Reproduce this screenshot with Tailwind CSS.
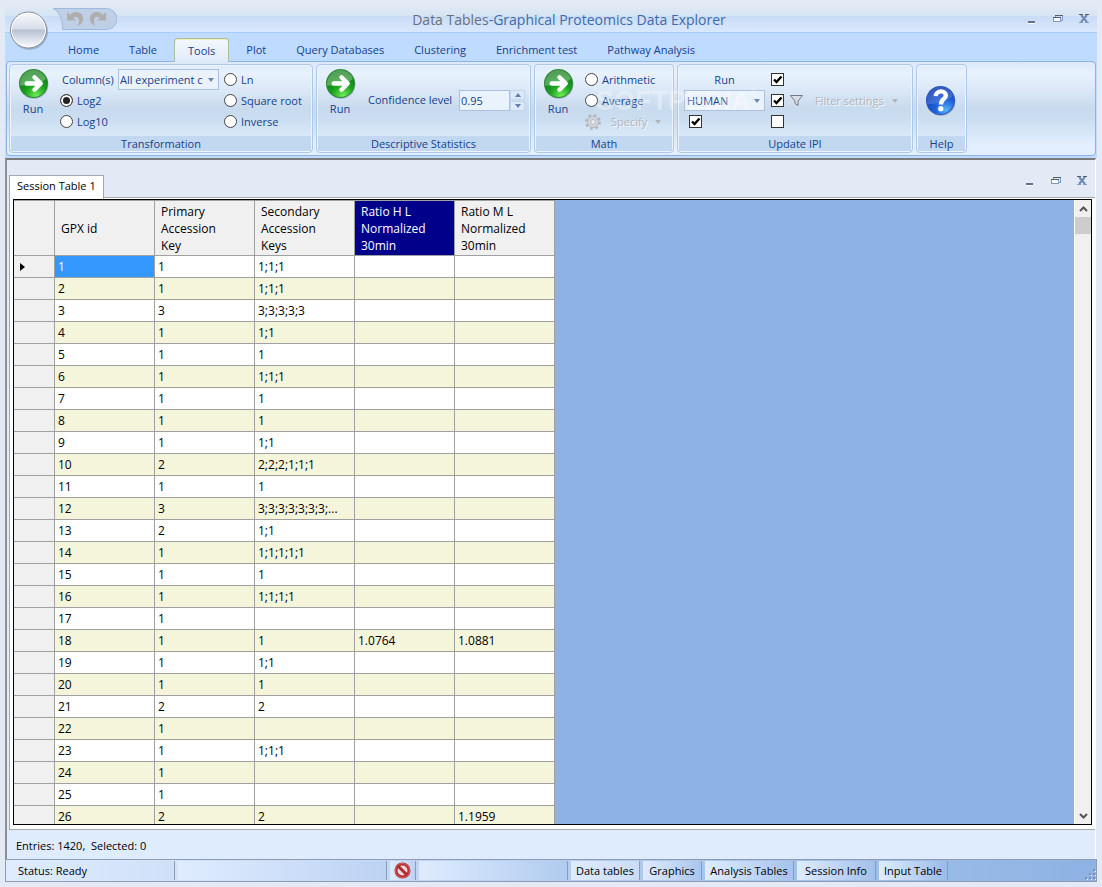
<!DOCTYPE html>
<html lang="en">
<head>
<meta charset="utf-8">
<title>Data Tables-Graphical Proteomics Data Explorer</title>
<script src="https://cdn.jsdelivr.net/npm/@tailwindcss/browser@4"></script>
</head>
<body class="flex h-screen flex-col overflow-hidden bg-[#e3eaf5] px-[5px] pt-[5px] pb-[5px] font-['Open_Sans','Noto_Sans',sans-serif] text-[11px] leading-4 text-black">

<svg class="absolute size-0" aria-hidden="true">
  <defs>
    <radialGradient id="gGreen" cx=".6" cy=".95" r=".85"><stop offset="0" stop-color="#6fee55"/><stop offset=".5" stop-color="#1a9f1e"/><stop offset="1" stop-color="#0b7a12"/></radialGradient>
    <radialGradient id="gBlue" cx=".7" cy=".85" r=".8"><stop offset="0" stop-color="#55b4fb"/><stop offset=".5" stop-color="#1d5fdc"/><stop offset="1" stop-color="#1746b8"/></radialGradient>
    <linearGradient id="gOrb" x2="0" y2="1"><stop offset="0" stop-color="#f6f8fb"/><stop offset=".48" stop-color="#d6dde8"/><stop offset=".49" stop-color="#b4bfd2"/><stop offset="1" stop-color="#f7f9fc"/></linearGradient>
    <symbol id="run" viewBox="0 0 32 32">
      <circle cx="16.500" cy="17" r="15" fill="#5d7896" opacity=".35"/>
      <circle cx="16" cy="16" r="15" fill="#2f8a3b"/>
      <circle cx="16" cy="16" r="14" fill="url(#gGreen)"/>
      <path d="M2 16A14 14 0 0 1 29 11Q21 19 2 18Z" fill="#fff" opacity=".3"/>
      <path d="M9 16H23M17 9.500L23.500 16L17 22.500" fill="none" stroke="#fff" stroke-width="4.500" stroke-linecap="round" stroke-linejoin="round"/>
    </symbol>
    <symbol id="help" viewBox="0 0 32 32">
      <circle cx="16.500" cy="17" r="15" fill="#5d7896" opacity=".4"/>
      <circle cx="16" cy="16" r="15" fill="#2858b8"/>
      <circle cx="16" cy="16" r="14" fill="url(#gBlue)"/>
      <path d="M2 16A14 14 0 0 1 29 11Q21 19 2 20Z" fill="#fff" opacity=".14"/>
      <path d="M11 11.500C11.500 5 21.500 5 21.500 11C21.500 14.500 16.500 14.500 16.500 20" fill="none" stroke="#fff" stroke-width="4.500"/>
      <circle cx="16.300" cy="24.500" r="2.700" fill="#fff"/>
    </symbol>
    <symbol id="undo" viewBox="0 0 17 16"><path d="M0 1V9.500H9L6 6.500C10 4 14 7 11 15C17 12 18 5 13 2C9.500 0 5.500 1 3 4Z" fill="#afaeae"/></symbol>
    <symbol id="tick" viewBox="0 0 13 13"><path d="M3 6.500L5.500 9L10.500 3.500" fill="none" stroke="#000" stroke-width="2.400"/></symbol>
    <symbol id="wmin" viewBox="0 0 10 10"><path d="M1 9.500H8" stroke="#fff"/><path d="M1 8H8" stroke="#5f7390" stroke-width="2"/></symbol>
    <symbol id="wres" viewBox="0 0 10 10"><path d="M2.500 3V1.500H9.500V6.500H8" fill="none" stroke="#7f9bc4"/><path d="M2 1.500H10" stroke="#5a5f68"/><rect x=".5" y="3.500" width="7" height="4" fill="#fff" stroke="#7f9bc4"/><path d="M0 3.500H8" stroke="#5a5f68"/></symbol>
    <symbol id="wcls" viewBox="0 0 10 10"><path d="M2 1L8 8M8 1L2 8" stroke="#6f8ab5" stroke-width="2"/><path d="M0 .5H4M6 .5H10" stroke="#5a5f68"/><path d="M0 8.500H4M6 8.500H10" stroke="#7f9bc4"/></symbol>
    <symbol id="down" viewBox="0 0 6 4"><path d="M0 0H6L3 4Z" fill="currentColor"/></symbol>
  </defs>
</svg>

<header class="relative shrink-0 bg-[#bfdbff] text-[#15428b]">
  <!-- title bar -->
  <div class="flex h-7 items-center border-b border-[#a9cdfb] bg-[linear-gradient(#e3eaf5,#d5e4f3_39%,#c9dcf6_40%,#d9e8fd)] pr-2 pl-12">
    <div class="relative flex h-[21px] w-16 shrink-0 items-center">
      <svg class="absolute inset-0 h-[22px] w-16" viewBox="0 0 64 22"><path d="M0 .5H53.500A10 10 0 0 1 53.500 21.500H9.500C9.500 10 6 3 0 .5Z" fill="#bfd0e6" stroke="#9dbbe2"/></svg>
      <button aria-label="Undo" class="relative ml-[14px]"><svg class="h-4 w-[17px]"><use href="#undo"/></svg></button>
      <button aria-label="Redo" class="relative ml-[5px]"><svg class="h-4 w-[17px] -scale-x-100"><use href="#undo"/></svg></button>
    </div>
    <h1 class="flex-1 pt-0.5 pr-1.5 text-center text-[14px] text-[#3e6aaa]"><span class="text-[#696f7a]">Data Tables</span>-Graphical Proteomics Data Explorer</h1>
    <div class="flex gap-4">
      <button aria-label="Minimize"><svg class="size-[10px]"><use href="#wmin"/></svg></button>
      <button aria-label="Restore"><svg class="size-[10px]"><use href="#wres"/></svg></button>
      <button aria-label="Close"><svg class="size-[10px]"><use href="#wcls"/></svg></button>
    </div>
  </div>
  <button aria-label="Application menu" class="absolute top-[6px] left-[4px]"><svg class="size-10" viewBox="0 0 40 40"><circle cx="20.500" cy="20.500" r="18.500" fill="#8494ad" opacity=".6"/><circle cx="19.500" cy="19" r="18" fill="#fff" stroke="#868d99"/><circle cx="19.500" cy="19" r="16.500" fill="url(#gOrb)"/></svg></button>

  <!-- ribbon tabs -->
  <nav class="flex h-7 items-end gap-1 pl-[50px]">
    <button class="h-6 px-[13px] pt-0.5">Home</button>
    <button class="h-6 px-[13px] pt-0.5">Table</button>
    <button class="relative z-10 -mb-px h-6 rounded-t border border-b-0 border-[#a9bfa0] bg-linear-to-b from-[#f4f8fd] to-[#e0ebf9] px-[13px] shadow-[inset_0_1px_0_#f6eeb4]">Tools</button>
    <button class="h-6 px-[13px] pt-0.5">Plot</button>
    <button class="h-6 px-[13px] pt-0.5">Query Databases</button>
    <button class="h-6 px-[13px] pt-0.5">Clustering</button>
    <button class="h-6 px-[13px] pt-0.5">Enrichment test</button>
    <button class="h-6 px-[13px] pt-0.5">Pathway Analysis</button>
  </nav>

  <!-- ribbon -->
  <div class="mr-px ml-px flex h-[95px] gap-[3px] rounded border border-[#8db2e3] bg-[linear-gradient(#dbe8f8,#e8f2fe_12%,#dbe8f7_30%,#c8daee_50%,#cbdef1_62%,#e3effe_90%)] px-0.5 py-0.5">
    <section class="flex w-[304px] flex-col rounded border border-[#aec8e9] p-px shadow-[inset_0_0_0_1px_#edf4fd]">
      <div class="flex flex-1">
        <button class="flex w-11 flex-col items-center gap-0.5 pt-0.5"><svg class="size-[31px]"><use href="#run"/></svg>Run</button>
        <div class="grid flex-1 grid-cols-[164px_1fr] grid-rows-[21px_21px_21px] items-center pt-[3px] pl-[5px]">
          <div class="flex items-center"><label for="cols" class="w-[58px] pl-0.5">Column(s)</label>
            <div class="relative h-[21px] w-[101px] border border-[#abc1de] bg-[#eaf2fb]">
              <select id="cols" class="h-full w-[84px] appearance-none overflow-hidden pl-px outline-none"><option>All experiment columns</option></select>
              <svg class="pointer-events-none absolute top-2 right-1 h-1 w-1.5 text-[#6a87b4]"><use href="#down"/></svg>
            </div></div>
          <label class="flex items-center gap-1"><input type="radio" name="tr" class="size-[13px] appearance-none rounded-full border border-[#444] bg-white">Ln</label>
          <label class="flex items-center gap-1"><input type="radio" name="tr" checked class="size-[13px] appearance-none rounded-full border border-[#444] bg-white checked:bg-[#222] checked:shadow-[inset_0_0_0_2px_#fff]">Log2</label>
          <label class="flex items-center gap-1"><input type="radio" name="tr" class="size-[13px] appearance-none rounded-full border border-[#444] bg-white">Square root</label>
          <label class="flex items-center gap-1"><input type="radio" name="tr" class="size-[13px] appearance-none rounded-full border border-[#444] bg-white">Log10</label>
          <label class="flex items-center gap-1"><input type="radio" name="tr" class="size-[13px] appearance-none rounded-full border border-[#444] bg-white">Inverse</label>
        </div>
      </div>
      <h2 class="h-[15px] bg-[#c2d8f0] text-center leading-4">Transformation</h2>
    </section>

    <section class="flex w-[215px] flex-col rounded border border-[#aec8e9] p-px shadow-[inset_0_0_0_1px_#edf4fd]">
      <div class="flex flex-1">
        <button class="flex w-11 flex-col items-center gap-0.5 pt-0.5"><svg class="size-[31px]"><use href="#run"/></svg>Run</button>
        <div class="flex flex-1 items-center pb-0.5 pl-1.5">
          <label for="conf" class="w-[91px] whitespace-nowrap">Confidence level</label>
          <input id="conf" value="0.95" class="h-[21px] w-[51px] border border-[#abc1de] bg-[#eaf2fb] px-px outline-none">
          <div class="flex flex-col gap-px">
            <button aria-label="Increase" class="flex h-[10px] w-[15px] items-center justify-center border border-[#c3d5ed] bg-[#dce9f9] text-[#5f7fb0]"><svg class="h-1 w-1.5 rotate-180"><use href="#down"/></svg></button>
            <button aria-label="Decrease" class="flex h-[10px] w-[15px] items-center justify-center border border-[#c3d5ed] bg-[#dce9f9] text-[#5f7fb0]"><svg class="h-1 w-1.5"><use href="#down"/></svg></button>
          </div>
        </div>
      </div>
      <h2 class="h-[15px] bg-[#c2d8f0] text-center leading-4">Descriptive Statistics</h2>
    </section>

    <section class="flex w-[140px] flex-col rounded border border-[#aec8e9] p-px shadow-[inset_0_0_0_1px_#edf4fd]">
      <div class="flex flex-1">
        <button class="flex w-11 flex-col items-center gap-0.5 pt-0.5"><svg class="size-[31px]"><use href="#run"/></svg>Run</button>
        <div class="grid flex-1 grid-rows-[21px_21px_21px] items-center pt-[3px] pl-[5px]">
          <label class="flex items-center gap-1"><input type="radio" name="ma" class="size-[13px] appearance-none rounded-full border border-[#444] bg-white">Arithmetic</label>
          <label class="flex items-center gap-1"><input type="radio" name="ma" class="size-[13px] appearance-none rounded-full border border-[#444] bg-white">Average</label>
          <button disabled class="flex items-center text-[#b1b5bb]">
            <svg class="size-4" viewBox="0 0 16 16"><circle cx="8" cy="8" r="6.500" fill="none" stroke="#b3b7bc" stroke-width="3" stroke-dasharray="2.550 2.550"/><circle cx="8" cy="8" r="5.500" fill="#d5d8dc" stroke="#b3b7bc"/><circle cx="8" cy="8" r="2.500" fill="#e8edf4" stroke="#b3b7bc"/></svg>
            <span class="ml-[10px] [text-shadow:1px_1px_#f4f8fd]">Specify</span><svg class="ml-2 h-1 w-1.5"><use href="#down"/></svg></button>
        </div>
      </div>
      <h2 class="h-[15px] bg-[#c2d8f0] text-center leading-4">Math</h2>
    </section>

    <section class="flex w-[236px] flex-col rounded border border-[#aec8e9] p-px shadow-[inset_0_0_0_1px_#edf4fd]">
      <div class="grid flex-1 grid-cols-[81px_1fr] grid-rows-[21px_21px_21px] items-center pt-[3px] pl-[5px]">
        <button>Run</button>
        <span class="relative ml-[6px] size-[13px] border border-[#333] bg-white"><input type="checkbox" aria-label="Option 1" checked class="peer absolute inset-0 appearance-none"><svg class="pointer-events-none absolute -inset-px hidden size-[13px] peer-checked:block"><use href="#tick"/></svg></span>
        <div class="relative h-[21px] w-[81px] border border-[#abc1de] bg-[#eaf2fb]">
          <select aria-label="Species" class="h-full w-full appearance-none pl-0.5 outline-none"><option>HUMAN</option></select>
          <svg class="pointer-events-none absolute top-2 right-1 h-1 w-1.5 text-[#6a87b4]"><use href="#down"/></svg>
        </div>
        <div class="flex items-center">
          <span class="relative ml-[6px] size-[13px] border border-[#333] bg-white"><input type="checkbox" aria-label="Filter" checked class="peer absolute inset-0 appearance-none"><svg class="pointer-events-none absolute -inset-px hidden size-[13px] peer-checked:block"><use href="#tick"/></svg></span>
          <button disabled class="flex items-center text-[#b1b5bb]"><svg class="ml-[6px] h-[11px] w-[13px]" viewBox="0 0 13 11"><path d="M.5 .5H12.500L8 6V10.500L5 8.500V6Z" fill="#d9e0e8" stroke="#75797f"/></svg><span class="ml-3 [text-shadow:1px_1px_#f4f8fd]">Filter settings</span><svg class="ml-2 h-1 w-1.5"><use href="#down"/></svg></button>
        </div>
        <span class="relative ml-[5px] size-[13px] border border-[#333] bg-white"><input type="checkbox" aria-label="Option 2" checked class="peer absolute inset-0 appearance-none"><svg class="pointer-events-none absolute -inset-px hidden size-[13px] peer-checked:block"><use href="#tick"/></svg></span>
        <span class="relative ml-[6px] size-[13px] border border-[#333] bg-white"><input type="checkbox" aria-label="Option 3" class="peer absolute inset-0 appearance-none"><svg class="pointer-events-none absolute -inset-px hidden size-[13px] peer-checked:block"><use href="#tick"/></svg></span>
      </div>
      <h2 class="h-[15px] bg-[#c2d8f0] text-center leading-4">Update IPI</h2>
    </section>

    <section class="flex w-[51px] flex-col rounded border border-[#aec8e9] p-px shadow-[inset_0_0_0_1px_#edf4fd]">
      <button aria-label="Help" class="flex flex-1 items-center justify-center pr-0.5 pb-0.5"><svg class="size-[31px]"><use href="#help"/></svg></button>
      <h2 class="h-[15px] bg-[#c2d8f0] text-center leading-4">Help</h2>
    </section>
  </div>
  <!-- translucent brand mark over the ribbon -->
  <div class="pointer-events-none absolute top-[80px] left-[591px] flex font-['Liberation_Sans',sans-serif] text-[27px] leading-8 font-bold text-white/35">SOFTPEDIA<span class="text-[9px] leading-3">®</span></div>
  <div class="h-0.5"></div>
</header>

<main class="mr-px flex min-h-0 flex-1 flex-col border-t-2 border-r border-l-2 border-t-[#7b7b7b] border-r-white border-l-[#8b8f96]">
  <div class="flex h-[38px] shrink-0 items-end pl-0.5">
    <button class="z-10 -mb-px h-6 border border-b-0 border-[#a5a8ad] bg-white px-[7px] pb-1 whitespace-nowrap">Session Table 1</button>
    <div class="flex h-full flex-1 items-center justify-end gap-4 border-b border-[#a5a8ad] pt-1 pr-2">
      <button aria-label="Minimize table"><svg class="size-[10px]"><use href="#wmin"/></svg></button>
      <button aria-label="Restore table"><svg class="size-[10px]"><use href="#wres"/></svg></button>
      <button aria-label="Close table"><svg class="size-[10px]"><use href="#wcls"/></svg></button>
    </div>
  </div>
  <div class="ml-0.5 flex min-h-0 flex-1 border-b border-l border-[#a5a8ad] bg-white pt-px pr-[3px] pb-1 pl-[3px]">
    <div class="flex min-w-0 flex-1 border border-black bg-[#8db2e3]">
      <div class="min-w-0 flex-1 overflow-hidden">
        <table class="w-[541px] table-fixed border-separate border-spacing-0 text-left text-[12px]">
          <colgroup><col class="w-[41px]"><col class="w-[100px]"><col class="w-[100px]"><col class="w-[100px]"><col class="w-[100px]"><col class="w-[100px]"></colgroup>
          <thead>
            <tr class="h-14 bg-[#f0f0f0] leading-[17px]">
              <th class="border-t border-r border-b border-[#a0a0a0]"></th>
              <th class="border-t border-r border-b border-[#a0a0a0] px-1.5 font-normal">GPX id</th>
              <th class="border-t border-r border-b border-[#a0a0a0] px-1.5 font-normal">Primary<br>Accession<br>Key</th>
              <th class="border-t border-r border-b border-[#a0a0a0] px-1.5 font-normal">Secondary<br>Accession<br>Keys</th>
              <th class="border-t border-r border-b border-[#a0a0a0] bg-[#00008b] px-1.5 font-normal text-white">Ratio H L<br>Normalized<br>30min</th>
              <th class="border-t border-r border-b border-[#a0a0a0] px-1.5 font-normal">Ratio M L<br>Normalized<br>30min</th>
            </tr>
          </thead>
          <tbody id="rows"></tbody>
        </table>
      </div>
      <div class="flex w-[17px] flex-col border-l border-white bg-[#f0f0f0] text-[#555]">
        <button aria-label="Scroll up" class="flex h-[17px] items-center justify-center"><svg class="h-[6px] w-[9px]" viewBox="0 0 9 6"><path d="M1 5L4.500 1.500L8 5" fill="none" stroke="currentColor" stroke-width="2"/></svg></button>
        <div class="h-[17px] bg-[#cdcdcd]"></div>
        <div class="flex-1"></div>
        <button aria-label="Scroll down" class="flex h-[17px] items-center justify-center"><svg class="h-[6px] w-[9px]" viewBox="0 0 9 6"><path d="M1 1L4.500 4.500L8 1" fill="none" stroke="currentColor" stroke-width="2"/></svg></button>
      </div>
    </div>
  </div>
  <div class="mt-px flex h-7 shrink-0 items-center bg-[#dfecfe] pt-0.5 pl-[9px] whitespace-pre">Entries: 1420,  Selected: 0</div>
</main>

<footer class="flex h-[23px] shrink-0 items-stretch gap-[3px] border border-[#8f9bb3] bg-linear-to-r from-[#dfecfe] to-[#8db2e3] py-px leading-5">
  <div class="w-[169px] border-r border-[#8f9bb3] bg-linear-to-r from-[#dfecfe] to-[#cfe0f8] pl-3">Status: Ready</div>
  <div class="w-[209px] border-r border-[#8f9bb3] bg-linear-to-r from-[#dfecfe] to-[#bdd3f3]"></div>
  <div class="flex w-[26px] items-center justify-center border-r border-[#8f9bb3] bg-linear-to-r from-[#dfecfe] to-[#bdd3f3]"><svg class="size-[17px]" viewBox="0 0 17 17"><circle cx="8.500" cy="8.500" r="6.500" fill="#e8d9e2" stroke="#b5262b" stroke-width="3"/><circle cx="8.500" cy="8.500" r="7" fill="none" stroke="#d9686a"/><path d="M4 4L13 13" stroke="#b5262b" stroke-width="3"/></svg></div>
  <div class="w-[149px] border-r border-[#8f9bb3] bg-linear-to-r from-[#dfecfe] to-[#b0cbf0]"></div>
  <button class="w-[69px] border-r border-[#8f9bb3] bg-linear-to-r from-[#dfecfe] to-[#cadcf7] whitespace-nowrap">Data tables</button>
  <button class="w-[59px] border-r border-[#8f9bb3] bg-linear-to-r from-[#dfecfe] to-[#a9c6ee] whitespace-nowrap">Graphics</button>
  <button class="w-[89px] border-r border-[#8f9bb3] bg-linear-to-r from-[#dfecfe] to-[#a6c3ed] whitespace-nowrap">Analysis Tables</button>
  <button class="w-[79px] border-r border-[#8f9bb3] bg-linear-to-r from-[#dfecfe] to-[#a2c0eb] whitespace-nowrap">Session Info</button>
  <button class="w-[69px] border-r border-[#8f9bb3] bg-linear-to-r from-[#dfecfe] to-[#9bbbe9] whitespace-nowrap">Input Table</button>
  <div class="flex flex-1 items-end justify-end"><svg class="size-3" viewBox="0 0 12 12"><path d="M9 1H11V3H9ZM9 5H11V7H9ZM5 5H7V7H5ZM9 9H11V11H9ZM5 9H7V11H5ZM1 9H3V11H1Z" fill="#8191b0"/><path d="M11 3H12V4H11ZM11 7H12V8H11ZM7 7H8V8H7ZM11 11H12V12H11ZM7 11H8V12H7ZM3 11H4V12H3Z" fill="#fff"/></svg></div>
</footer>

<script>
const data = [["1","1;1;1"],["1","1;1;1"],["3","3;3;3;3;3"],["1","1;1"],["1","1"],["1","1;1;1"],["1","1"],["1","1"],["1","1;1"],["2","2;2;2;1;1;1"],["1","1"],["3","3;3;3;3;3;3;3;..."],["2","1;1"],["1","1;1;1;1;1"],["1","1"],["1","1;1;1;1"],["1",""],["1","1","1.0764","1.0881"],["1","1;1"],["1","1"],["2","2"],["1",""],["1","1;1;1"],["1",""],["1",""],["2","2","","1.1959"]];
const td = (t, c) => `<td class="truncate border-r border-b border-[#a0a0a0] px-[3px] ${c}">${t || ""}</td>`;
document.getElementById("rows").innerHTML = data.map((r, i) =>
  `<tr class="h-[22px] ${i % 2 ? "bg-[#f5f5dc]" : "bg-white"}"><td class="border-r border-b border-[#a0a0a0] bg-[#f0f0f0] px-1.5">${i ? "" : '<svg class="h-2 w-[5px]" viewBox="0 0 5 8"><path d="M0 0V8L5 4Z"/></svg>'}</td>`
  + td(i + 1, i ? "" : "bg-[#3399ff] text-white") + td(r[0], "") + td(r[1], "") + td(r[2], "") + td(r[3], "") + "</tr>").join("");
</script>
</body>
</html>
